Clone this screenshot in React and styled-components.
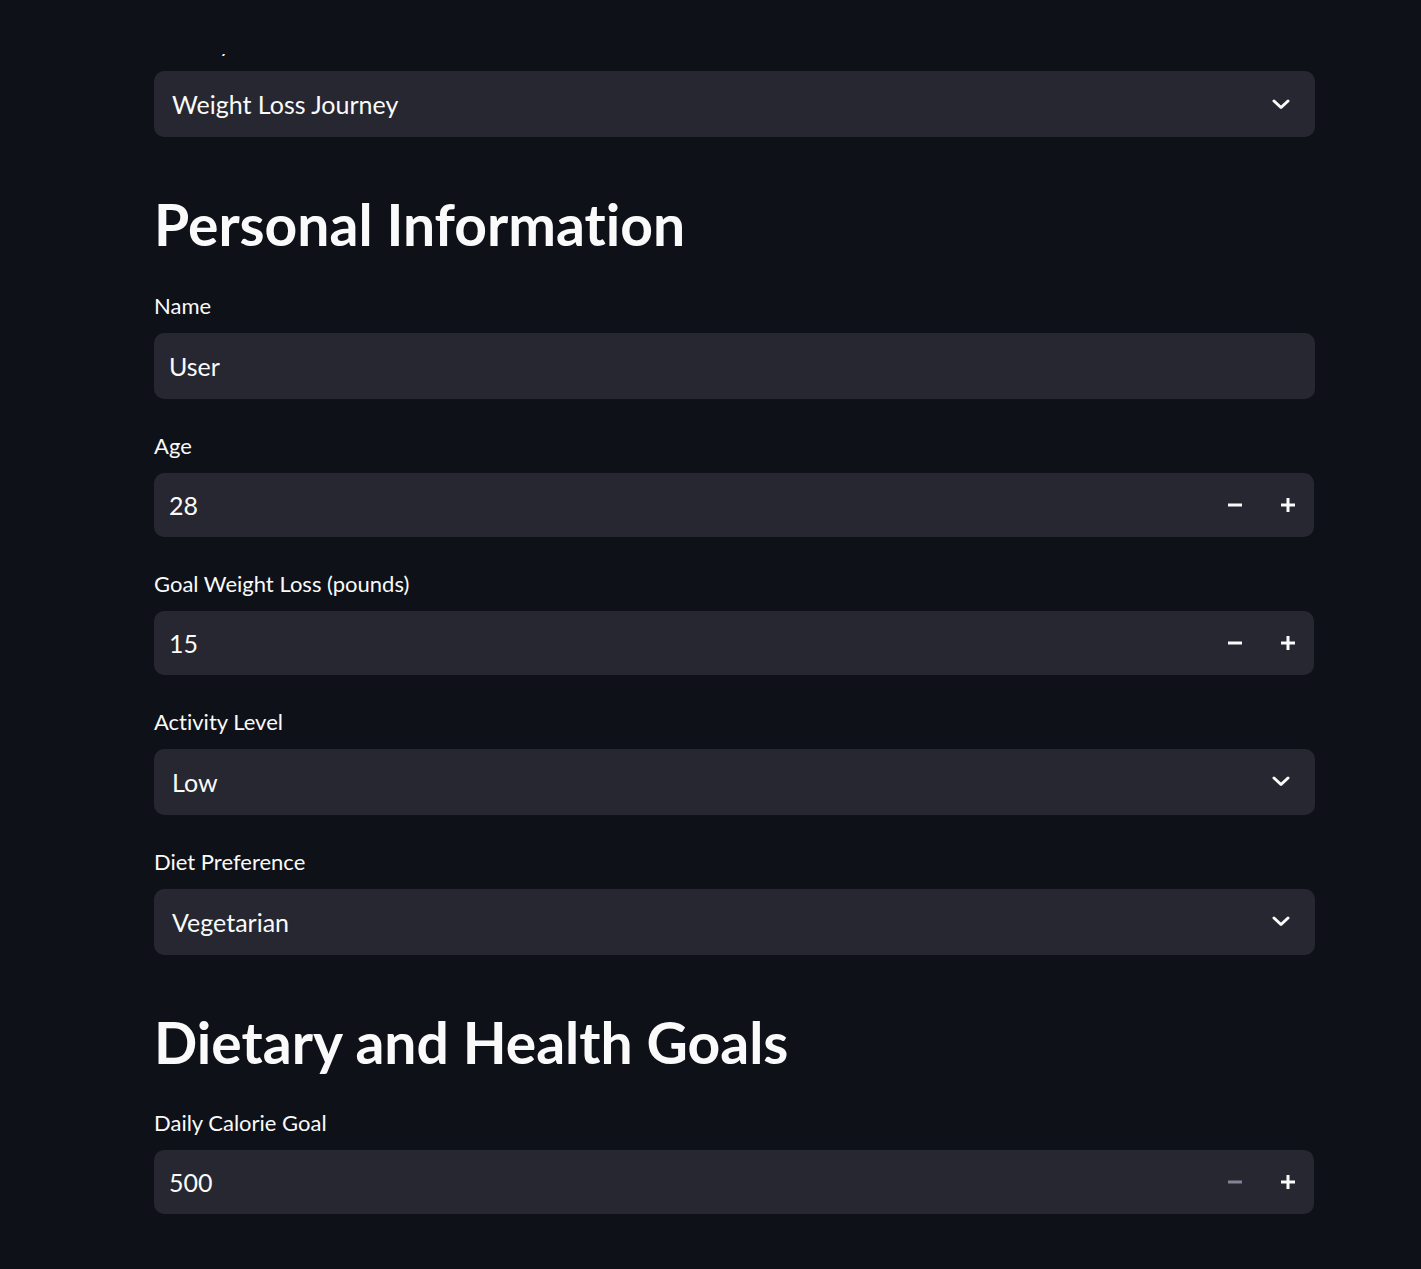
import styled, { createGlobalStyle } from 'styled-components';

const GlobalStyle = createGlobalStyle`
	body {
		margin: 0;
		background: #0e1117;
		color: #fafafa;
		font-family: Lato, 'Liberation Sans', sans-serif;
		font-variant-ligatures: none;
	}
`;

// header strip of the app that covers the scrolled content
const TopBar = styled.div`
	position: fixed;
	top: 0;
	left: 0;
	right: 0;
	height: 54px;
	background: #0e1117;
	z-index: 10;
`;

const Main = styled.main`
	display: flex;
	flex-direction: column;
	gap: 32px;
	width: 1161px;
	padding: 29px 0 60px 154px;
`;

const Heading = styled.h2`
	margin: 23px 0 1px;
	font-size: 57px;
	line-height: 1.15;
	font-weight: 700;
	color: #fafafa;
`;

const Field = styled.div`
	display: flex;
	flex-direction: column;
`;

const Label = styled.label`
	font-size: 22px;
	line-height: 30px;
	margin-bottom: 12px;
	color: #fafafa;
`;

const Box = styled.div`
	display: flex;
	align-items: center;
	height: ${(p) => p.$height || 66}px;
	width: ${(p) => p.$width || 1161}px;
	background: #262730;
	border-radius: 10px;
	overflow: hidden;
`;

const Value = styled.div`
	flex: 1;
	padding-left: ${(p) => p.$pad || 15}px;
	font-size: 25px;
	color: #fafafa;
`;

const Chevron = styled.div`
	display: flex;
	align-items: center;
	padding-right: 25px;
`;

const StepButton = styled.div`
	display: flex;
	align-items: center;
	justify-content: center;
	width: 53px;
	height: 100%;
	color: ${(p) => (p.$disabled ? '#808495' : '#fafafa')};
`;

const ChevronIcon = () => (
	<svg width="18" height="11" viewBox="0 0 18 11" fill="none">
		<polyline points="2,2 9,8.5 16,2" stroke="#fafafa" strokeWidth="3" strokeLinecap="round" strokeLinejoin="round" />
	</svg>
);

const MinusIcon = () => (
	<svg width="14" height="14" viewBox="0 0 14 14">
		<rect x="0" y="5.5" width="14" height="3" fill="currentColor" />
	</svg>
);

const PlusIcon = () => (
	<svg width="14" height="14" viewBox="0 0 14 14">
		<rect x="0" y="5.5" width="14" height="3" fill="currentColor" />
		<rect x="5.5" y="0" width="3" height="14" fill="currentColor" />
	</svg>
);

const SelectField = ({ label, value }) => (
	<Field>
		<Label>{label}</Label>
		<Box>
			<Value $pad={18}>{value}</Value>
			<Chevron>
				<ChevronIcon />
			</Chevron>
		</Box>
	</Field>
);

const TextField = ({ label, value }) => (
	<Field>
		<Label>{label}</Label>
		<Box>
			<Value>{value}</Value>
		</Box>
	</Field>
);

const NumberField = ({ label, value, atMin }) => (
	<Field>
		<Label>{label}</Label>
		<Box $height={64} $width={1160}>
			<Value>{value}</Value>
			<StepButton $disabled={atMin}>
				<MinusIcon />
			</StepButton>
			<StepButton>
				<PlusIcon />
			</StepButton>
		</Box>
	</Field>
);

export default function App() {
	return (
		<>
			<GlobalStyle />
			<TopBar />
			<Main>
				<SelectField label="Journey" value="Weight Loss Journey" />
				<Heading>Personal Information</Heading>
				<TextField label="Name" value="User" />
				<NumberField label="Age" value="28" />
				<NumberField label="Goal Weight Loss (pounds)" value="15" />
				<SelectField label="Activity Level" value="Low" />
				<SelectField label="Diet Preference" value="Vegetarian" />
				<Heading>Dietary and Health Goals</Heading>
				<NumberField label="Daily Calorie Goal" value="500" atMin />
			</Main>
		</>
	);
}
